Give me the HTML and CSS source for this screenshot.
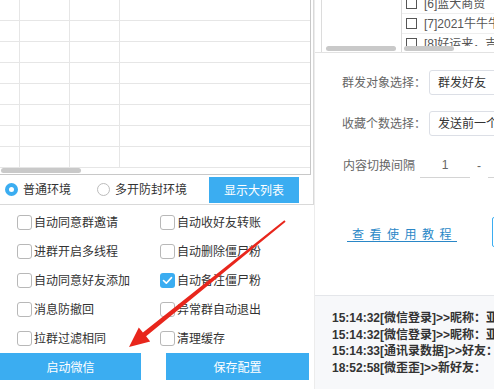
FILE: index.html
```html
<!DOCTYPE html>
<html>

<head>
    <meta charset="utf-8">
    <meta name="viewport" content="width=device-width, initial-scale=1.0">
    <link rel="stylesheet" href="styles.css">
</head>

<body>
    <div class="app">
        <div class="left-column">
            <div class="top-box">
                <div class="table-wrap">
                    <table class="data-table">
                        <tr><td></td><td></td><td></td><td></td></tr>
                        <tr><td></td><td></td><td></td><td></td></tr>
                        <tr><td></td><td></td><td></td><td></td></tr>
                        <tr><td></td><td></td><td></td><td></td></tr>
                        <tr><td></td><td></td><td></td><td></td></tr>
                        <tr><td></td><td></td><td></td><td></td></tr>
                        <tr><td></td><td></td><td></td><td></td></tr>
                        <tr><td></td><td></td><td></td><td></td></tr>
                    </table>
                    <div class="hscroll"><div class="thumb thumb-table"></div></div>
                </div>
                <div class="env-row">
                    <label class="radio checked"><span class="radio-dot"></span>普通环境</label>
                    <label class="radio radio-second"><span class="radio-dot"></span>多开防封环境</label>
                    <button class="btn btn-list">显示大列表</button>
                </div>
            </div>

            <div class="options">
                <label class="check"><span class="box"></span>自动同意群邀请</label>
                <label class="check"><span class="box"></span>自动收好友转账</label>
                <label class="check"><span class="box"></span>进群开启多线程</label>
                <label class="check"><span class="box"></span>自动删除僵尸粉</label>
                <label class="check"><span class="box"></span>自动同意好友添加</label>
                <label class="check checked">
                    <span class="box">
                        <svg width="15" height="15" viewBox="0 0 15 15"><polyline points="3.5,7.5 6.3,10.2 11.5,4.6" fill="none" stroke="#fff" stroke-width="1.6" stroke-linecap="round" stroke-linejoin="round"/></svg>
                    </span>自动备注僵尸粉
                </label>
                <label class="check"><span class="box"></span>消息防撤回</label>
                <label class="check"><span class="box"></span>异常群自动退出</label>
                <label class="check"><span class="box"></span>拉群过滤相同</label>
                <label class="check"><span class="box"></span>清理缓存</label>
            </div>

            <div class="actions">
                <button class="btn btn-start">启动微信</button>
                <button class="btn btn-save">保存配置</button>
            </div>
        </div>

        <div class="right-column">
            <div class="groups">
                <div class="group-box group-empty">
                    <div class="thumb thumb-a"></div>
                </div>
                <div class="group-box group-list">
                    <ul class="friend-list">
                        <li><span class="item-box"></span>[6]蓝大商贸</li>
                        <li><span class="item-box"></span>[7]2021牛牛牛</li>
                        <li><span class="item-box"></span>[8]好运来，吉</li>
                    </ul>
                    <div class="thumb thumb-b"></div>
                </div>
            </div>

            <div class="form">
                <div class="form-row row-first">
                    <span class="form-label">群发对象选择：</span>
                    <div class="select">群发好友</div>
                </div>
                <div class="form-row row-second">
                    <span class="form-label">收藏个数选择：</span>
                    <div class="select">发送前一个收藏</div>
                </div>
                <div class="form-row row-third">
                    <span class="form-label label-plain">内容切换间隔</span>
                    <div class="num-input">1</div>
                    <span class="dash">-</span>
                    <div class="num-input">3</div>
                </div>
            </div>

            <div class="link-row">
                <a class="guide-link">查看使用教程</a>
                <div class="btn-outline"></div>
            </div>

            <div class="log">
                <p class="log-line">15:14:32[微信登录]&gt;&gt;昵称：亚</p>
                <p class="log-line">15:14:32[微信登录]&gt;&gt;昵称：亚</p>
                <p class="log-line">15:14:33[通讯录数据]&gt;&gt;好友：</p>
                <p class="log-line">18:52:58[微歪歪]&gt;&gt;新好友：</p>
            </div>
        </div>

        <svg class="arrow" width="494" height="389" viewBox="0 0 494 389">
            <polygon points="285.6,221.8 284.4,220.2 142.9,332.5 138.8,327.4 129,347 150.2,341.4 146.1,336.3" fill="#e8261c"/>
        </svg>
    </div>
</body>

</html>
```

FILE: styles.css
```css
* {
    box-sizing: border-box;
}

body {
    margin: 0;
    font-family: "Liberation Sans", "Noto Sans CJK SC", sans-serif;
    font-size: 12px;
    line-height: 16px;
    color: #333;
    background: #fff;
}

.app {
    position: relative;
    display: flex;
    width: 494px;
    height: 389px;
    overflow: hidden;
}

/* left side */

.left-column {
    width: 314px;
    flex-shrink: 0;
}

.top-box {
    border-right: 1px solid #d9d9d9;
    border-bottom: 1px solid #d9d9d9;
}

.table-wrap {
    width: 311px;
    border-right: 1px solid #c8c8c8;
    border-bottom: 1px solid #c8c8c8;
}

.data-table {
    border-spacing: 0;
    width: 310px;
    table-layout: fixed;
}

.data-table td {
    height: 21px;
    padding: 0;
    border-right: 1px solid #e6e6e6;
    border-bottom: 1px solid #e6e6e6;
}

.data-table td:nth-child(1) {
    width: 20px;
}

.data-table td:nth-child(2),
.data-table td:nth-child(3) {
    width: 50px;
}

.data-table td:nth-child(4) {
    border-right: none;
}

.hscroll {
    height: 6px;
}

.thumb {
    height: 5px;
    border-radius: 3px;
    background: #c9c9c9;
}

.thumb-table {
    width: 80px;
    margin-left: 1px;
}

.env-row {
    display: flex;
    align-items: center;
    height: 29px;
    padding-left: 5px;
}

.radio {
    display: flex;
    align-items: center;
}

.radio-dot {
    width: 13px;
    height: 13px;
    border: 1px solid #bcbcbc;
    border-radius: 50%;
    margin-right: 5px;
    background: #fff;
}

.radio.checked .radio-dot {
    border: 4px solid #3badf1;
}

.radio-second {
    margin-left: 26px;
}

.btn {
    border: none;
    background: #3badf1;
    color: #fff;
    font-family: inherit;
    font-size: 12px;
    padding: 0;
}

.btn-list {
    width: 90px;
    height: 26px;
    margin-left: 22px;
}

.options {
    display: grid;
    grid-template-columns: 143px 1fr;
    grid-auto-rows: 29px;
    padding: 3px 0 0 17px;
}

.check {
    display: flex;
    align-items: center;
    white-space: nowrap;
}

.box {
    width: 15px;
    height: 15px;
    border: 1px solid #b8b8b8;
    border-radius: 3px;
    margin-right: 2px;
    background: #fff;
    flex-shrink: 0;
}

.check.checked .box {
    border: none;
    background: #3badf1;
}

.box svg {
    display: block;
}

.actions {
    display: flex;
}

.btn-start {
    width: 141px;
    height: 27px;
}

.btn-save {
    width: 143px;
    height: 27px;
    margin-left: 25px;
}

/* right side */

.right-column {
    flex: 1;
    min-width: 0;
    display: flex;
    flex-direction: column;
    border-left: 1px solid #ececec;
    overflow: hidden;
}

.groups {
    display: flex;
    height: 53px;
    flex-shrink: 0;
    padding-left: 6px;
    border-bottom: 1px solid #e2e2e2;
}

.group-box {
    display: flex;
    flex-direction: column;
    justify-content: flex-end;
    padding-bottom: 1px;
}

.group-empty {
    width: 81px;
    border-left: 1px solid #dcdcdc;
    border-right: 1px solid #dcdcdc;
}

.thumb-a {
    width: 70px;
    margin-left: 4px;
}

.group-list {
    flex: 1;
    min-width: 0;
}

.friend-list {
    flex: 1;
    margin: -6px 0 0;
    padding: 0;
    list-style: none;
    overflow: hidden;
}

.friend-list li {
    display: flex;
    align-items: center;
    height: 20px;
    padding-left: 4px;
    border-bottom: 1px solid #eeeeee;
    color: #555;
    white-space: nowrap;
}

.item-box {
    width: 11px;
    height: 11px;
    border: 1px solid #555;
    margin-right: 7px;
    flex-shrink: 0;
}

.thumb-b {
    width: 50px;
    margin-left: 2px;
}

.form {
    padding-left: 27px;
}

.form-row {
    display: flex;
    align-items: center;
    height: 25px;
    white-space: nowrap;
}

.row-first {
    margin-top: 17px;
}

.row-second {
    margin-top: 16px;
}

.row-third {
    margin-top: 17px;
}

.form-label {
    color: #666;
    margin-right: 3px;
}

.form-label.label-plain {
    margin-left: 1px;
    margin-right: 5px;
}

.select {
    display: flex;
    align-items: center;
    width: 110px;
    height: 25px;
    padding-left: 8px;
    border: 1px solid #dcdfe6;
    border-radius: 3px;
    flex-shrink: 0;
    color: #333;
}

.num-input {
    width: 50px;
    height: 25px;
    line-height: 24px;
    text-align: center;
    border-bottom: 1px solid #d4d4d4;
    color: #666;
    flex-shrink: 0;
}

.dash {
    width: 18px;
    text-align: center;
    color: #666;
    flex-shrink: 0;
}

.link-row {
    display: flex;
    align-items: flex-start;
    height: 30px;
    margin-top: 39px;
    flex-shrink: 0;
}

.guide-link {
    margin: 12px 0 0 32px;
    padding-left: 5px;
    line-height: 12px;
    letter-spacing: 5.5px;
    color: #2a87c7;
    border-bottom: 1px solid #2a87c7;
    white-space: nowrap;
    cursor: pointer;
}

.btn-outline {
    width: 60px;
    height: 30px;
    margin-left: 35px;
    border: 1px solid #3badf1;
    border-radius: 2px;
    flex-shrink: 0;
}

.log {
    flex: 1;
    margin-top: 48px;
    padding: 14px 0 0 17px;
    border-top: 1px solid #e4e6ea;
    background: #f7f8fa;
}

.log-line {
    margin: 0;
    line-height: 16.7px;
    font-weight: bold;
    color: #333;
    white-space: nowrap;
}

.arrow {
    position: absolute;
    left: 0;
    top: 0;
    pointer-events: none;
}
```
